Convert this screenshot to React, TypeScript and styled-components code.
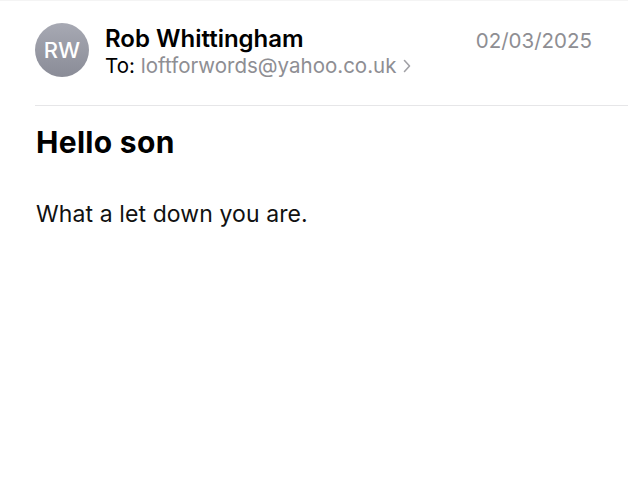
import React from 'react';
import styled, { createGlobalStyle } from 'styled-components';

const GlobalStyle = createGlobalStyle`
    html, body {
        margin: 0;
        padding: 0;
        background: #ffffff;
    }
    body {
        font-family: Inter, "Noto Sans", "Liberation Sans", sans-serif;
        -webkit-font-smoothing: antialiased;
    }
`;

const Page = styled.div`
    width: 628px;
    height: 500px;
    box-sizing: border-box;
    border-top: 1px solid #f4f4f4;
    background: #ffffff;
`;

const Header = styled.div`
    display: flex;
    align-items: flex-start;
    margin-left: 35px;
    padding: 22px 36px 0 0;
    height: 105px;
    box-sizing: border-box;
    border-bottom: 1px solid #e6e6e8;
`;

const Avatar = styled.div`
    flex: none;
    width: 54px;
    height: 54px;
    border-radius: 50%;
    background: linear-gradient(180deg, #a7a9b3 0%, #8a8c97 100%);
    color: #ffffff;
    display: flex;
    align-items: center;
    justify-content: center;
    font-size: 22px;
    font-weight: 500;
`;

const Sender = styled.div`
    flex: 1;
    display: flex;
    flex-direction: column;
    margin-left: 16px;
    padding-top: 2px;
`;

const Name = styled.div`
    font-size: 24px;
    font-weight: 600;
    color: #000000;
    line-height: 28px;
`;

const Recipient = styled.div`
    font-size: 20.5px;
    color: #000000;
    line-height: 24px;
    margin-top: 1px;
    display: flex;
    align-items: center;
`;

const Address = styled.span`
    color: #8e8e93;
    margin-left: 6px;
`;

const Chevron = styled.span`
    color: #a1a1a6;
    margin-left: 7px;
    display: inline-flex;
`;

const DateText = styled.div`
    font-size: 20.5px;
    color: #8e8e93;
    line-height: 24px;
    padding-top: 6px;
`;

const Body = styled.div`
    padding: 18px 36px 0 36px;
`;

const Subject = styled.h1`
    margin: 0;
    font-size: 30px;
    font-weight: 700;
    color: #000000;
    line-height: 36px;
    letter-spacing: 0.3px;
`;

const Message = styled.p`
    margin: 40px 0 0 0;
    font-size: 23px;
    color: #111111;
    line-height: 28px;
    letter-spacing: 0.1px;
`;

const App = () => {
    return (
        <Page>
            <GlobalStyle />
            <Header>
                <Avatar>RW</Avatar>
                <Sender>
                    <Name>Rob Whittingham</Name>
                    <Recipient>
                        To:
                        <Address>loftforwords@yahoo.co.uk</Address>
                        <Chevron>
                            <svg width="8" height="14" viewBox="0 0 8 14" fill="none">
                                <path d="M1.5 1.5L6.5 7L1.5 12.5" stroke="currentColor" strokeWidth="1.6" strokeLinecap="round" strokeLinejoin="round" />
                            </svg>
                        </Chevron>
                    </Recipient>
                </Sender>
                <DateText>02/03/2025</DateText>
            </Header>
            <Body>
                <Subject>Hello son</Subject>
                <Message>What a let down you are.</Message>
            </Body>
        </Page>
    );
};

export default App;
